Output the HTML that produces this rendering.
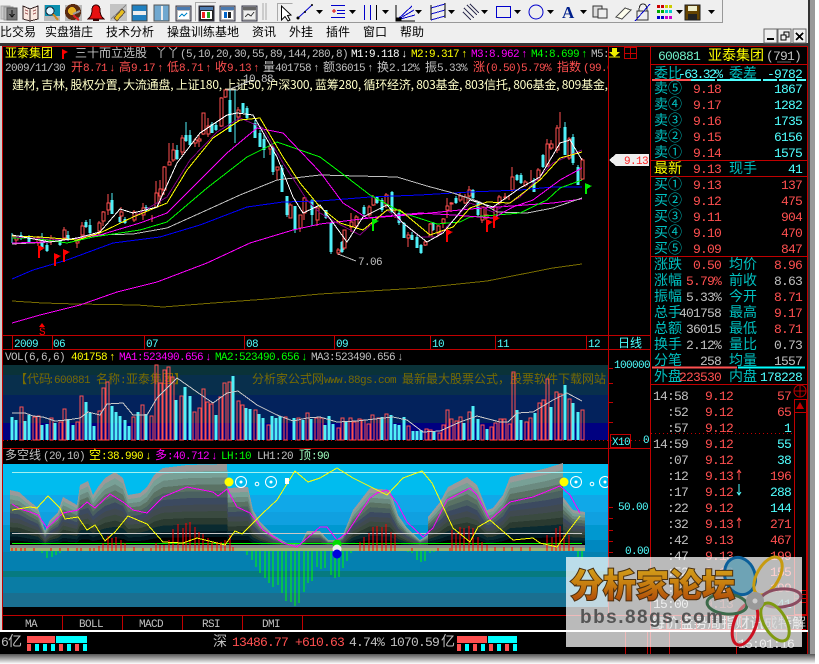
<!DOCTYPE html>
<html><head><meta charset="utf-8"><style>
html,body{margin:0;padding:0;background:#fff;width:819px;height:664px;overflow:hidden}
svg{display:block}
.s{shape-rendering:crispEdges}
text{white-space:pre}
.a{font:11px "Liberation Mono",monospace;letter-spacing:-.6px}
.b{font:13px "Liberation Mono",monospace;letter-spacing:-.8px}
.c{font:12px "WenQuanYi Zen Hei","Noto Sans CJK SC",sans-serif}
.d{font:14px "WenQuanYi Zen Hei","Noto Sans CJK SC",sans-serif}
.l{fill:none}
</style></head><body>
<svg width="819" height="664" viewBox="0 0 819 664" xmlns="http://www.w3.org/2000/svg">
<defs>
<linearGradient id="sh" x1="0" y1="0" x2="0" y2="1"><stop offset="0" stop-color="#555"/><stop offset="1" stop-color="#fff"/></linearGradient>
<linearGradient id="gd" x1="0" y1="0" x2="0" y2="1"><stop offset="0" stop-color="#d8b020"/><stop offset=".5" stop-color="#c88010"/><stop offset="1" stop-color="#a83808"/></linearGradient>
<path id="m" d="M10 548V490L19 492 28 500 38 508 45 531 50 520 58 512 63 497 77 505 80 485 88 481 93 495 98 487 105 478 115 472 123 478 128 495 140 493 147 487 154 475 163 468 187 465 227 464 228 488 248 487 253 510 260 522 273 535 287 543 300 545 307 531 320 531 328 540 337 540 343 535 353 510 370 488 390 490 398 515 407 528 420 540 428 535 428 517 440 502 448 487 467 477 477 485 487 510 493 508 503 495 510 477 547 468 563 463 563 497 573 510 585 512 585 548Z"/>
<clipPath id="cl"><rect x="3" y="464" width="605" height="143"/></clipPath>
<clipPath id="cm"><rect x="3" y="46" width="605" height="290"/></clipPath>
</defs>
<!-- window chrome -->
<rect width="819" height="664" fill="#fff"/>
<rect x="0" y="0" width="809" height="46" fill="#efefef"/>
<rect x="809" y="0" width="6" height="654" fill="#999"/>
<rect x="808" y="0" width="2" height="654" fill="#333"/>
<rect x="0" y="43" width="808" height="3" fill="#333"/>
<rect x="0" y="46" width="808" height="608" fill="#000"/>
<rect x="0" y="46" width="2" height="584" fill="#ccc"/>
<rect x="0" y="654" width="815" height="10" fill="url(#sh)"/>
<g class="s"><path d="M0 22.5H722.5V0" stroke="#999" fill="none"/><path d="M263 3V20M266 3V20" stroke="#aaa"/>
<path d="M195.500 21V2.500H216" fill="none" stroke="#aaa"/><path d="M277.500 21V3.500H292.500" fill="none" stroke="#aaa"/>
</g>
<!-- toolbar left icons -->
<g class="s">
<rect x="1" y="6" width="9" height="13" fill="#ccc" stroke="#aaa"/><rect x="4" y="7" width="9" height="13" fill="#bbb" stroke="#999"/><rect x="7" y="8" width="10" height="12" fill="#777" stroke="#555"/><path d="M12 10v6M9.500 14l2.500 3 2.500-3" stroke="#111" fill="none"/>
<path d="M23 6l7 3 8-3v13l-8 2-7-2z" fill="#fbe8e0" stroke="#322"/><path d="M30 9v12" stroke="#322"/><path d="M25 10l3 1M25 13l3 1M33 11l3-1M33 14l3-1" stroke="#a66"/>
<rect x="44" y="5" width="16" height="16" fill="#bbb"/><rect x="45" y="5" width="15" height="11" fill="#0a90b0"/><circle cx="50" cy="11" r="4" fill="#dff4ff" stroke="#123"/><path d="M53 14l5 6" stroke="#c82" stroke-width="2"/>
<rect x="65" y="5" width="17" height="16" fill="#bbb"/><circle cx="73" cy="12" r="8" fill="#5a2a10"/><circle cx="72" cy="11" r="4" fill="#e8b020"/><path d="M73 15l6 5" stroke="#d22" stroke-width="2"/><path d="M73 14l7-3" stroke="#999" stroke-width="2"/>
<path d="M88 19q4-3 4-9 0-5 4-5t4 5q0 6 4 9z" fill="#e81010" stroke="#300"/><rect x="93" y="19" width="6" height="2" fill="#300"/>
<rect x="110" y="4" width="17" height="17" fill="#c4c4c4"/><path d="M111 19l15-14" stroke="#888"/><path d="M114 18l8-9 3 3-8 9z" fill="#e8c020" stroke="#654"/>
<rect x="132" y="5" width="15" height="16" fill="#2080c0" stroke="#444"/><rect x="133" y="11" width="13" height="4" fill="#eee"/>
<rect x="154" y="5" width="15" height="16" fill="#70a8d0" stroke="#555"/><rect x="161" y="6" width="2" height="14" fill="#eee"/>
<rect x="176" y="6" width="15" height="15" fill="#bbb" stroke="#334"/><rect x="177" y="7" width="13" height="3" fill="#4a7ab0"/><rect x="178" y="11" width="11" height="8" fill="#fff"/><path d="M179 17l3-3 2 2 3-3" stroke="#08c" fill="none"/>
<rect x="199" y="6" width="15" height="15" fill="#222" stroke="#334"/><rect x="200" y="7" width="13" height="3" fill="#4a7ab0"/><rect x="201" y="11" width="11" height="8" fill="#fff"/><rect x="202" y="12" width="3" height="6" fill="#e22"/><rect x="207" y="12" width="3" height="6" fill="#2a2"/>
<rect x="220" y="6" width="15" height="15" fill="#bbb" stroke="#334"/><rect x="221" y="7" width="13" height="3" fill="#4a7ab0"/><rect x="222" y="11" width="11" height="8" fill="#fff"/><rect x="224" y="12" width="3" height="6" fill="#06c"/><rect x="228" y="12" width="3" height="6" fill="#222"/>
<rect x="242" y="6" width="15" height="15" fill="#bbb" stroke="#334"/><rect x="243" y="7" width="13" height="3" fill="#666"/><rect x="244" y="11" width="11" height="8" fill="#eee"/><path d="M245 17l3-3 3 2 3-4" stroke="#444" fill="none"/>
</g>
<!-- toolbar right icons -->
<path d="M281.500 6V20L285 16.500 288 21 290 20 287.500 15.500 291 15Z" fill="#fff" stroke="#000"/>
<path d="M298 18L312 5" stroke="#00c"/><circle cx="312" cy="5" r="1" fill="#000"/><circle cx="298" cy="18" r="1.500" fill="#000"/><circle cx="305" cy="12" r="1" fill="#000"/>
<g fill="#000"><path d="M316 10h7l-3.500 4zM349 10h7l-3.500 4zM382 10h7l-3.500 4zM415 10h7l-3.500 4zM448 10h7l-3.500 4zM481 10h7l-3.500 4zM514 10h7l-3.500 4zM547 10h7l-3.500 4zM580 10h7l-3.500 4zM676 10h7l-3.500 4zM708 10h7l-3.500 4z"/></g>
<g stroke="#00c" fill="none" class="s">
<path d="M331 5.500h14M331 17.500h14M337 10.500h8M337 13.500h8"/><path d="M334 9v4M332 11h4" stroke="#d00"/>
<path d="M364.500 5v15M370.500 5v15"/><path d="M376.500 5v15" stroke="#000"/>
<path d="M397 20L412 6M397 20L414 10M397 20L415 15" />
<path d="M396 5V21H415" stroke="#000"/><path d="M397 18l4 0v3h-4z" fill="#000" stroke="#000"/>
<path d="M431 8l14-4M431 14l14-4M431 20l14-4"/><path d="M431 5V20M445 3V18" stroke="#000"/>
<path d="M464 8l10 10M467 5l10 10M470 4l9 9M463 12l8 8" stroke="#335"/>
<rect x="496.500" y="6.500" width="14" height="11"/>
</g>
<circle cx="536" cy="12" r="7" fill="none" stroke="#00c"/>
<text x="562" y="18" font-family="Liberation Serif" font-weight="bold" font-size="17" fill="#00208c">A</text>
<g class="s"><rect x="593" y="6" width="9" height="11" fill="#ddd" stroke="#333"/><rect x="598" y="9" width="9" height="9" fill="#eee" stroke="#333"/>
<path d="M616 17l9-9 6 2-9 9z" fill="#ffe" stroke="#555"/>
<rect x="637" y="11" width="11" height="9" fill="#eee" stroke="#333"/><path d="M639 11q0-7 4-7t4 7" fill="none" stroke="#333"/><path d="M635 21L650 4" stroke="#00c"/>
<g><rect x="657" y="5" width="3" height="3" fill="#c00"/><rect x="661" y="5" width="3" height="3" fill="#c00"/><rect x="665" y="5" width="3" height="3" fill="#cc0"/><rect x="669" y="5" width="3" height="3" fill="#cc0"/><rect x="657" y="10" width="3" height="3" fill="#0a0"/><rect x="661" y="10" width="3" height="3" fill="#0a0"/><rect x="665" y="10" width="3" height="3" fill="#0cc"/><rect x="669" y="10" width="3" height="3" fill="#0cc"/><rect x="657" y="16" width="3" height="3" fill="#00c"/><rect x="661" y="16" width="3" height="3" fill="#00c"/><rect x="665" y="16" width="3" height="3" fill="#c0c"/><rect x="669" y="16" width="3" height="3" fill="#c0c"/></g>
<rect x="685" y="5" width="15" height="15" fill="#664400" stroke="#222"/><rect x="688" y="6" width="9" height="5" fill="#eec"/><rect x="688" y="14" width="9" height="6" fill="#222"/></g>
<!-- menu -->
<g class="c" fill="#000">
<text x="0" y="36">比交易</text><text x="45" y="36">实盘猎庄</text><text x="106" y="36">技术分析</text><text x="167" y="36">操盘训练基地</text><text x="252" y="36">资讯</text><text x="289" y="36">外挂</text><text x="326" y="36">插件</text><text x="363" y="36">窗口</text><text x="400" y="36">帮助</text>
</g>
<g class="s">
<rect x="764" y="29" width="13" height="14" fill="#efefef" stroke="#666"/><rect x="767" y="38" width="7" height="2" fill="#000"/>
<rect x="778" y="29" width="13" height="14" fill="#efefef" stroke="#666"/><rect x="784" y="32" width="5" height="5" fill="none" stroke="#000"/><rect x="781" y="35" width="5" height="5" fill="#efefef" stroke="#000"/>
<rect x="793" y="29" width="13" height="14" fill="#efefef" stroke="#666"/><path d="M796 33l7 7M803 33l-7 7" stroke="#000" stroke-width="1.500"/>
</g>
<!-- main chart -->
<g class="s" stroke="#c00000" fill="none">
<path d="M2.500 46V630M2 46.500H807.500V654M608.500 46V615M650.500 46V654"/>
<path d="M3 335.500H650M3 349.500H650M3 448.500H650M3 615.500H807M651 64.500H807M651 160.500H807M651 176.500H807M651 256.500H807M651 384.500H807"/>
<path d="M12.500 336V349M52.500 336V349M144.500 336V349M244.500 336V349M334.500 336V349M430.500 336V349M495.500 336V349M586.500 336V349"/>
<path d="M62.500 615V630M122.500 615V630M182.500 615V630M242.500 615V630M302.500 615V630M625.500 632V654M647.500 632V654M669.500 632V654M736.500 632V654M808 46"/>
<rect x="610.500" y="434.500" width="20" height="13"/>
<rect x="624.500" y="47.500" width="12" height="11"/><path d="M630.500 48V58M624 53.500H636"/>
<path d="M608 368.500h5M608 383.500h5M608 402.500h5M608 422.500h5M608 507.500h5M608 518.500h5M608 530.500h5M608 541.500h5M608 552.500h5"/>
<rect x="794.500" y="399.500" width="12" height="215"/><path d="M794 412.500h12M794 590.500h12M794 594.500h12M794 598.500h12M794 602.500h12"/>
</g>
<circle cx="800" cy="391" r="6" fill="none" stroke="#c00000"/><path d="M794 391h12M800 385v12" stroke="#c00000"/>
<path d="M800 402l4 7h-8z" fill="#c00000"/>
<path d="M609 160l7-6h33v12h-33z" fill="#eee" class="s"/>
<text class="a" x="624" y="164" fill="#ff2020">9.13</text>
<path d="M612 48h5v4h3l-5.500 5-5.500-5h3z" fill="#ee0"/><path d="M609 57h11" stroke="#ee0"/>
<!-- Header text -->
<g clip-path="url(#cm)">
<text class="c" x="5" y="57" fill="#ffff00">亚泰集团</text>
<path d="M62 49v10h2v-5l4-2z" fill="#ff0000"/>
<text class="c" x="75" y="57" fill="#c0c0c0">三十而立选股</text>
<text class="c" x="155" y="57" fill="#c0c0c0">丫丫</text>
<text class="a" x="180" y="57" fill="#c0c0c0">(5,10,20,30,55,89,144,280,8)</text>
<text class="a" x="351" y="57" fill="#fff">M1:9.118</text><text class="a" x="401" y="57" fill="#fff">↓</text>
<text class="a" x="411" y="57" fill="#ffff00">M2:9.317</text><text class="a" x="461" y="57" fill="#ffff00">↑</text>
<text class="a" x="471" y="57" fill="#ff00ff">M3:8.962</text><text class="a" x="521" y="57" fill="#ff00ff">↑</text>
<text class="a" x="531" y="57" fill="#00ff00">M4:8.699</text><text class="a" x="581" y="57" fill="#00ff00">↑</text>
<text class="a" x="591" y="57" fill="#c0c0c0">M5:</text>
<text class="a" x="5" y="71" fill="#c0c0c0">2009/11/30</text>
<g fill="#ff5050"><text class="c" x="71" y="71">开</text><text class="a" x="83" y="71">8.71</text><text class="a" x="109" y="71">↓</text><text class="c" x="119" y="71">高</text><text class="a" x="131" y="71">9.17</text><text class="a" x="157" y="71">↑</text><text class="c" x="167" y="71">低</text><text class="a" x="179" y="71">8.71</text><text class="a" x="205" y="71">↑</text><text class="c" x="215" y="71">收</text><text class="a" x="227" y="71">9.13</text><text class="a" x="253" y="71">↑</text></g>
<g fill="#c0c0c0"><text class="c" x="263" y="71">量</text><text class="a" x="275" y="71">401758</text><text class="a" x="313" y="71">↑</text><text class="c" x="323" y="71">额</text><text class="a" x="335" y="71">36015</text><text class="a" x="367" y="71">↑</text><text class="c" x="377" y="71">换</text><text class="a" x="389" y="71">2.12%</text><text class="c" x="425" y="71">振</text><text class="a" x="437" y="71">5.33%</text></g>
<g fill="#ff5050"><text class="c" x="473" y="71">涨</text><text class="a" x="485" y="71">(0.50)5.79%</text><text class="c" x="557" y="71">指数</text><text class="a" x="583" y="71">(99.0</text></g>
<text class="c" x="12" y="89" fill="#ffffc8" textLength="596">建材, 吉林, 股权分置, 大流通盘, 上证180, 上证50, 沪深300, 蓝筹280, 循环经济, 803基金, 803信托, 806基金, 809基金,</text>
<text class="a" x="243" y="82" fill="#c0c0c0">10.88</text>
<path d="M226 90h12" stroke="#c0c0c0"/>
</g>
<!-- Candles -->
<g class="s">
<path fill="none" stroke="#50f0f8" d="M12 233V243M21 232V240M29 235V243M42 233V249M47 243V252M60 238V246M68 231V241M86 220V228M90 219V235M112 193V214M120 213V223M125 217V224M146 205V212M177 145V160M186 122V142M190 130V146M212 122V133M216 122V131M230 90V132M235 90V143M243 103V113M247 106V119M255 120V138M260 130V147M264 135V158M273 145V175M282 165V192M287 196V217M295 206V233M312 199V226M326 210V219M331 223V254M342 241V253M364 205V216M377 196V204M382 198V212M392 191V213M399 211V225M404 222V238M412 232V240M417 235V248M421 244V254M433 222V231M456 196V204M473 189V199M478 202V216M517 174V181M521 173V184M534 178V192M543 154V168M565 122V155M573 134V165M578 165V185"/>
<path fill="none" stroke="#50f0f8" stroke-width="3" d="M21 235V238M29 237V242M42 243V248M47 245V251M60 240V245M68 235V240M86 222V227M90 225V233M112 200V214M120 217V222M125 219V223M146 207V211M177 150V159M186 135V141M190 135V145M212 124V133M216 125V130M230 100V132M243 103V113M247 108V118M255 123V138M260 133V147M264 139V150M273 147V172M282 168V192M287 196V215M295 206V230M312 200V215M326 210V218M331 223V252M342 242V252M364 207V214M377 197V203M382 200V210M392 192V212M399 213V223M404 223V238M412 235V240M417 237V248M421 245V253M433 223V230M456 198V203M473 190V198M478 203V215M517 175V180M521 175V183M534 180V192M543 155V167M565 127V155M573 137V163M578 167V185"/>
<path fill="none" stroke="#ff5050" d="M16 237V245M38 236V246M51 235V245M64 227V240M77 240V248M82 222V238M99 221V235M103 211V226M108 194V215M121 207V221M134 210V222M143 203V220M152 215V222M156 181V208M160 180V204M164 166V195M169 143V165M173 143V162M182 135V155M195 138V147M199 135V147M203 113V135M208 118V137M221 97V127M225 90V98M238 107V122M270 145V155M277 167V180M290 203V218M300 215V232M304 197V220M317 207V226M338 248V255M344 230V250M351 213V232M356 215V229M369 205V217M373 195V206M386 193V208M395 210V218M408 232V247M425 241V246M430 223V237M438 225V237M443 218V228M447 198V218M451 202V212M460 192V202M465 194V204M469 186V200M482 207V223M486 207V220M495 205V218M499 195V205M505 193V200M509 195V200M512 167V192M525 180V187M531 170V183M538 168V180M547 139V167M551 140V150M557 125V153M560 112V128M569 137V160M582 158V180"/>
<path fill="#000" stroke="#ff5050" d="M15 238h3v2h-3zM37 238h3v5h-3zM50 239h3v2h-3zM63 230h3v8h-3zM76 241h3v2h-3zM81 226h3v9h-3zM98 223h3v8h-3zM102 212h3v9h-3zM107 203h3v7h-3zM120 212h3v4h-3zM133 212h3v8h-3zM142 208h3v7h-3zM155 193h3v14h-3zM159 189h3v7h-3zM163 167h3v23h-3zM168 162h3v3h-3zM172 150h3v10h-3zM181 138h3v14h-3zM194 140h3v3h-3zM198 139h3v2h-3zM202 113h3v21h-3zM207 126h3v8h-3zM220 98h3v28h-3zM224 90h3v7h-3zM237 110h3v7h-3zM269 146h3v3h-3zM276 167h3v3h-3zM289 205h3v13h-3zM299 215h3v13h-3zM303 198h3v15h-3zM316 208h3v12h-3zM337 250h3v3h-3zM343 230h3v18h-3zM350 222h3v5h-3zM355 217h3v9h-3zM368 207h3v8h-3zM372 197h3v8h-3zM385 195h3v10h-3zM407 235h3v3h-3zM424 242h3v3h-3zM429 224h3v13h-3zM437 226h3v7h-3zM442 219h3v4h-3zM446 206h3v4h-3zM450 203h3v1h-3zM459 196h3v4h-3zM464 197h3v6h-3zM468 190h3v6h-3zM481 207h3v13h-3zM485 215h3v3h-3zM494 207h3v10h-3zM498 197h3v6h-3zM504 197h3v1h-3zM511 177h3v13h-3zM524 182h3v3h-3zM537 170h3v10h-3zM546 144h3v22h-3zM550 144h3v4h-3zM556 128h3v22h-3zM568 139h3v19h-3zM581 160h3v19h-3z"/>
</g>
<!-- MAs -->
<g fill="none" stroke-width="1" class="s">
<polyline stroke="#786c00" points="12,301 43,303 77,304 137,305 163,307 213,303 267,299 320,294 353,292 420,288 487,281 553,268 582,264"/>
<polyline stroke="#ff00ff" points="12,323 40,315 80,305 117,292 157,282 207,263 250,243 293,230 320,224 370,218 420,214 470,209 553,203 582,199"/>
<polyline stroke="#0000ff" points="12,279 33,270 67,260 113,243 160,237 200,225 247,207 283,202 320,201 370,197 420,195 470,192 520,190 553,187 582,187"/>
<polyline stroke="#c0c0c0" points="12,244 50,242 100,235 133,234 167,228 207,210 240,195 277,180 320,175 397,177 427,186 453,193 480,202 497,212 527,213 553,208 582,198"/>
<polyline stroke="#00ff00" points="12,238 33,238 67,243 93,237 140,230 167,222 207,188 247,157 277,142 320,157 340,172 370,195 403,213 437,224 460,222 470,217 497,215 520,213 547,200 560,188 582,180"/>
<polyline stroke="#ff00ff" points="12,243 50,242 100,235 140,223 167,213 200,180 227,153 257,128 283,133 320,172 343,203 367,218 420,213 453,215 493,218 513,207 533,200 560,180 582,168"/>
<polyline stroke="#800080" points="12,237 67,240 100,233 133,217 167,197 190,160 217,132 240,118 263,128 283,163 307,200 320,213 337,223 360,235 387,210 420,237 437,237 470,203 493,212 520,197 553,163 582,150"/>
<polyline stroke="#ffff00" points="12,236 40,237 77,240 100,233 133,217 167,203 187,170 213,138 240,120 260,118 283,157 300,183 320,207 340,223 363,230 387,210 400,210 430,235 453,227 470,208 487,202 510,203 540,180 560,158 582,152"/>
<polyline stroke="#ffffff" points="12,235 50,242 77,238 100,232 120,209 133,213 157,207 177,163 200,133 227,115 237,113 253,115 277,157 293,197 303,213 320,205 347,242 363,217 387,205 403,223 427,242 443,233 470,200 493,207 520,188 540,177 560,143 570,140 582,160"/>
<path d="M228 90L250 81M338 254L356 261" stroke="#c0c0c0" fill="none"/>
<g fill="#ff0000" stroke="none"><path d="M38 245v13h2v-7l5-3zM54 253v13h2v-7l5-3zM63 249v13h2v-7l5-3zM446 229v13h2v-7l5-3zM486 219v13h2v-7l5-3zM493 215v13h2v-7l5-3z"/></g>
<g fill="#00ee00" stroke="none"><path d="M372 218v13h2v-7l5-3zM585 183v11h2v-5l5-3z"/></g>
</g>
<text class="a" x="358" y="265" fill="#c0c0c0">7.06</text>
<path d="M42 323l3 4h-6z" fill="#ff0000"/><text class="a" x="39" y="335" fill="#ff0000" font-weight="bold">S</text>
<!-- date axis -->
<g class="a" fill="#50ffff"><text x="14" y="347">2009</text><text x="53" y="347">06</text><text x="146" y="347">07</text><text x="246" y="347">08</text><text x="336" y="347">09</text><text x="432" y="347">10</text><text x="497" y="347">11</text><text x="588" y="347">12</text></g>
<text class="c" x="618" y="347" fill="#50ffff">日线</text>
<!-- VOL -->
<text class="a" x="5" y="360" fill="#c0c0c0">VOL(6,6,6)</text><text class="a" x="71" y="360" fill="#ffff00">401758</text><text class="a" x="109" y="360" fill="#ffff00">↑</text>
<text class="a" x="119" y="360" fill="#ff00ff">MA1:523490.656</text><text class="a" x="205" y="360" fill="#ff00ff">↓</text>
<text class="a" x="215" y="360" fill="#00ff00">MA2:523490.656</text><text class="a" x="301" y="360" fill="#00ff00">↓</text>
<text class="a" x="311" y="360" fill="#c0c0c0">MA3:523490.656</text><text class="a" x="397" y="360" fill="#c0c0c0">↓</text>
<g class="s">
<rect x="3" y="365" width="605" height="10" fill="#0a3238"/><rect x="3" y="375" width="605" height="20" fill="#082f4c"/><rect x="3" y="395" width="605" height="28" fill="#03225c"/><rect x="3" y="423" width="605" height="17" fill="#000080"/>
</g>
<g fill="#786c00">
<text class="c" x="15" y="383">【代码</text><text class="a" x="48" y="383">:600881</text><text class="c" x="96" y="383">名称</text><text class="a" x="120" y="383">:</text><text class="c" x="126" y="383">亚泰集团】</text>
<text class="c" x="252" y="383">分析家公式网</text><text class="a" x="324" y="383">www.88gs.com</text><text class="c" x="402" y="383">最新最大股票公式，股票软件下载网站</text>
</g>
<g class="s">
<path fill="none" stroke="#50f0f8" stroke-width="3" d="M12 417V440M16 420V440M25 421V440M29 415V440M42 425V440M47 424V440M55 423V440M68 419V440M73 425V440M86 402V440M90 413V440M94 426V440M112 406V440M116 412V440M120 416V440M125 420V440M129 426V440M138 412V440M146 414V440M176 400V440M185 387V440M190 396V440M216 415V440M233 376V440M246 408V440M250 409V440M259 414V440M263 418V440M272 416V440M276 418V440M280 416V440M294 418V440M303 420V440M311 419V440M325 425V440M329 416V440M333 424V440M346 421V440M382 417V440M391 415V440M395 424V440M399 425V440M404 417V440M413 431V440M417 431V440M421 430V440M434 431V440M464 423V440M473 406V440M478 419V440M487 429V440M517 410V440M521 420V440M535 413V440M551 407V440M565 385V440M573 403V440M578 412V440"/>
<path fill="none" stroke="#ff5050" d="M20 407h3v33h-3zM33 417h3v23h-3zM37 416h3v24h-3zM50 418h3v22h-3zM59 422h3v18h-3zM63 409h3v31h-3zM76 422h3v18h-3zM80 396h3v44h-3zM98 411h3v29h-3zM102 388h3v52h-3zM106 382h3v58h-3zM132 417h3v23h-3zM141 405h3v35h-3zM150 416h3v24h-3zM155 365h3v75h-3zM159 383h3v57h-3zM163 370h3v70h-3zM167 367h3v73h-3zM171 377h3v63h-3zM180 396h3v44h-3zM193 412h3v28h-3zM198 408h3v32h-3zM202 389h3v51h-3zM206 402h3v38h-3zM210 404h3v36h-3zM219 397h3v43h-3zM223 383h3v57h-3zM228 382h3v58h-3zM237 401h3v39h-3zM241 405h3v35h-3zM254 410h3v30h-3zM267 425h3v15h-3zM284 417h3v23h-3zM297 418h3v22h-3zM306 413h3v27h-3zM315 418h3v22h-3zM320 418h3v22h-3zM337 428h3v12h-3zM341 418h3v22h-3zM349 418h3v22h-3zM353 422h3v18h-3zM358 419h3v21h-3zM362 420h3v20h-3zM367 424h3v16h-3zM371 415h3v25h-3zM377 418h3v22h-3zM385 414h3v26h-3zM407 426h3v14h-3zM425 429h3v11h-3zM429 430h3v10h-3zM438 433h3v7h-3zM442 425h3v15h-3zM446 410h3v30h-3zM450 419h3v21h-3zM455 421h3v19h-3zM459 417h3v23h-3zM468 412h3v28h-3zM481 425h3v15h-3zM490 427h3v13h-3zM494 423h3v17h-3zM499 419h3v21h-3zM503 419h3v21h-3zM508 424h3v16h-3zM512 372h3v68h-3zM525 422h3v18h-3zM529 418h3v22h-3zM538 403h3v37h-3zM542 400h3v40h-3zM546 379h3v61h-3zM555 392h3v48h-3zM559 394h3v46h-3zM568 399h3v41h-3zM581 410h3v30h-3z"/>
<path d="M3 440.500H650" stroke="#c00000" stroke-dasharray="1 3"/>
</g>
<polyline class="s" fill="none" stroke="#c8c8c8" points="12,413 25,413 33,416 43,417 55,421 67,420 80,418 88,412 100,415 107,404 123,403 133,415 147,415 157,398 177,378 197,392 213,403 227,393 238,391 257,405 277,415 293,421 307,418 320,417 337,422 357,421 393,417 407,420 423,432 440,431 460,422 477,416 500,422 508,422 517,413 533,412 553,400 567,393 582,401"/>
<text class="a" x="614" y="368" fill="#50ffff">100000</text>
<text class="a" x="612" y="445" fill="#50ffff">X10</text><text class="a" x="643" y="443" fill="#50ffff">0</text>
<!-- Lower -->
<text class="c" x="5" y="459" fill="#c0c0c0">多空线</text><text class="a" x="43" y="459" fill="#c0c0c0">(20,10)</text>
<text class="c" x="89" y="459" fill="#ffff00">空</text><text class="a" x="101" y="459" fill="#ffff00">:38.990</text><text class="a" x="145" y="459" fill="#ffff00">↓</text>
<text class="c" x="155" y="459" fill="#ff00ff">多</text><text class="a" x="167" y="459" fill="#ff00ff">:40.712</text><text class="a" x="211" y="459" fill="#ff00ff">↓</text>
<text class="a" x="221" y="459" fill="#00ff00">LH:10</text><text class="a" x="257" y="459" fill="#c0c0c0">LH1:20</text>
<text class="c" x="299" y="459" fill="#a0ffc0">顶</text><text class="a" x="311" y="459" fill="#a0ffc0">:90</text>
<g class="s">
<rect x="3" y="464" width="605" height="31" fill="#00bcef"/><rect x="3" y="495" width="605" height="17" fill="#10a8e8"/><rect x="3" y="512" width="605" height="13" fill="#10a0e0"/><rect x="3" y="525" width="605" height="15" fill="#0098d0"/><rect x="3" y="540" width="605" height="12" fill="#0088c0"/><rect x="3" y="552" width="605" height="19" fill="#0480b0"/><rect x="3" y="571" width="605" height="6" fill="#067a80"/><rect x="3" y="577" width="605" height="16" fill="#0a7ca4"/><rect x="3" y="593" width="605" height="14" fill="#1a6f90"/>
<g transform="translate(0,548)">
<use href="#m" y="-548" fill="#9a9a9a" transform="scale(1,1)"/>
<use href="#m" y="-548" fill="#78a096" transform="scale(1,.92)"/>
<use href="#m" y="-548" fill="#6b8a80" transform="scale(1,.84)"/>
<use href="#m" y="-548" fill="#5a7264" transform="scale(1,.76)"/>
<use href="#m" y="-548" fill="#4a6060" transform="scale(1,.68)"/>
<use href="#m" y="-548" fill="#3c4a60" transform="scale(1,.60)"/>
<use href="#m" y="-548" fill="#404a50" transform="scale(1,.52)"/>
<use href="#m" y="-548" fill="#3a4a40" transform="scale(1,.44)"/>
<use href="#m" y="-548" fill="#2a3a30" transform="scale(1,.36)"/>
<use href="#m" y="-548" fill="#0a2a30" transform="scale(1,.28)"/>
<use href="#m" y="-548" fill="#001820" transform="scale(1,.20)"/>
<use href="#m" y="-548" fill="#000" transform="scale(1,.13)"/>
</g>
<rect x="10" y="545" width="575" height="3" fill="#888"/><rect x="10" y="548" width="575" height="3" fill="#a0b070"/>
<path d="M12 472.500H582" stroke="#a0f0f0"/><path d="M12 533.500H582" stroke="#c8c8c8"/><path d="M12 543.500H582" stroke="#00ff00"/>
<!-- histogram -->
<path fill="none" stroke="#ff0000" d="M12 548V551M16 548V551M21 548V551M25 548V551M34 548V551M51 548V551M60 548V551M68 548V551M77 548V551M81 548V551M90 548V551M94 548V551M99 546V551M103 543V551M108 536V551M112 538V551M116 537V551M121 540V551M125 543V551M134 547V551M143 548V551M151 548V551M156 543V551M160 545V551M164 545V551M169 540V551M173 529V551M178 524V551M183 528V551M186 523V551M190 522V551M195 527V551M199 532V551M203 534V551M208 538V551M212 542V551M217 542V551M221 542V551M225 540V551M230 535V551M233 547V551M360 542V551M364 537V551M369 533V551M373 527V551M377 526V551M382 527V551M386 524V551M391 532V551M395 534V551M412 548V551M438 548V551M450 548V551M452 530V551M456 533V551M460 527V551M464 528V551M469 526V551M473 528V551M478 537V551M482 542V551M487 545V551M495 547V551M504 547V551M512 547V551M521 547V551M530 547V551M547 535V551M552 537V551M556 528V551M560 526V551M564 535V551M569 535V551M573 547V551"/>
<path fill="none" stroke="#00ff00" d="M42 551V553M47 551V558M52 551V557M56 551V555M60 551V553M247 551V555M252 551V560M256 551V567M260 551V573M265 551V578M269 551V583M273 551V587M278 551V585M282 551V593M286 551V601M291 551V602M295 551V606M299 551V603M304 551V592M308 551V583M312 551V581M317 551V567M321 551V569M325 551V568M331 551V575M335 551V578M339 551V577M343 551V568M347 551V561M351 551V553M408 551V552M412 551V553M417 551V560M421 551V562M425 551V561M430 551V553M434 551V552M578 551V557M582 551V560"/>
</g>
<g clip-path="url(#cl)" fill="none">
<g class="s">
<polyline stroke="#ff00ff" points="12,504 20,509 30,512 38,515 47,528 63,513 78,510 87,502 95,508 110,494 123,502 133,510 147,513 163,497 187,487 213,492 218,496 227,489 237,507 250,513 263,530 283,543 297,547 320,527 327,527 337,540 347,533 370,498 377,493 387,490 397,503 407,522 423,537 433,528 447,500 470,488 477,495 490,520 510,502 533,497 560,486 570,495 580,513"/>
<polyline stroke="#ffff00" points="12,510 30,507 37,508 48,496 60,508 65,519 78,517 87,530 95,525 105,541 115,532 128,516 147,524 163,542 183,543 197,538 213,542 225,545 235,531 242,534 263,513 277,500 295,471 308,482 320,478 337,468 353,478 373,488 387,495 403,478 422,471 432,483 453,528 470,542 478,527 490,520 513,540 533,538 540,543 557,547 567,533 580,516"/>
</g>
<circle cx="229" cy="482" r="4.500" fill="#ffff00"/>
<circle cx="241" cy="482" r="5.500" stroke="#fff"/><circle cx="241" cy="482" r="1.500" fill="#fff"/>
<circle cx="257" cy="484" r="1.800" stroke="#fff"/>
<circle cx="271" cy="482" r="5.500" stroke="#fff"/><circle cx="271" cy="482" r="1.500" fill="#fff"/>
<rect x="285" y="478" width="4" height="6" fill="#fff"/>
<circle cx="564" cy="482" r="4.500" fill="#ffff00"/>
<circle cx="576" cy="482" r="5.500" stroke="#fff"/><circle cx="576" cy="482" r="1.500" fill="#fff"/>
<circle cx="592" cy="484" r="1.800" stroke="#fff"/>
<circle cx="605" cy="482" r="5.500" stroke="#fff"/><circle cx="605" cy="482" r="1.500" fill="#fff"/>
<circle cx="337" cy="544" r="4.500" fill="#00dd00"/><circle cx="337" cy="549" r="4.500" fill="#eee"/><circle cx="337" cy="554" r="4.500" fill="#0000dd"/>
</g>
<text class="a" x="618" y="510" fill="#50ffff">50.00</text><text class="a" x="625" y="554" fill="#50ffff">0.00</text>
<!-- tabs -->
<g class="a" fill="#c0c0c0" text-anchor="middle"><text x="31" y="627">MA</text><text x="91" y="627">BOLL</text><text x="151" y="627">MACD</text><text x="211" y="627">RSI</text><text x="271" y="627">DMI</text></g>
<rect x="0" y="630" width="808" height="2" fill="#fff"/>
<!-- Right panel -->
<text class="b" x="658" y="60" fill="#70f0c8">600881</text><text class="d" x="708" y="60" fill="#ffff00">亚泰集团</text><text class="b" x="766" y="60" fill="#c0c0c0">(791)</text>
<path d="M777 62h14" stroke="#666" class="s"/>
<text class="d" x="654" y="78" fill="#00c0c0">委比</text><text class="b" x="678" y="78" fill="#50ffff" style="letter-spacing:-1.600px">-63.32%</text><text class="d" x="729" y="78" fill="#00c0c0">委差</text><text class="b" x="802" y="78" fill="#50ffff" text-anchor="end">-9782</text>
<path d="M652 80h39M696 80h4" stroke="#ff5050" stroke-width="2" class="s"/><path d="M691 80h24M717 80h44M763 80h14M779 80h16M797 80h9" stroke="#50ffff" stroke-width="2" class="s"/>
<g class="d" fill="#00c0c0">
<text x="654" y="93">卖⑤</text><text x="654" y="109">卖④</text><text x="654" y="125">卖③</text><text x="654" y="141">卖②</text><text x="654" y="157">卖①</text>
<text x="654" y="189">买①</text><text x="654" y="205">买②</text><text x="654" y="221">买③</text><text x="654" y="237">买④</text><text x="654" y="253">买⑤</text>
<text x="654" y="269">涨跌</text><text x="654" y="285">涨幅</text><text x="654" y="301">振幅</text><text x="654" y="317">总手</text><text x="654" y="333">总额</text><text x="654" y="349">换手</text><text x="654" y="365">分笔</text><text x="654" y="381">外盘</text>
<text x="729" y="173">现手</text><text x="729" y="269">均价</text><text x="729" y="285">前收</text><text x="729" y="301">今开</text><text x="729" y="317">最高</text><text x="729" y="333">最低</text><text x="729" y="349">量比</text><text x="729" y="365">均量</text><text x="729" y="381">内盘</text>
</g>
<text class="d" x="654" y="173" fill="#ffff00">最新</text>
<g class="b" fill="#ff5050" text-anchor="end">
<text x="721" y="93">9.18</text><text x="721" y="109">9.17</text><text x="721" y="125">9.16</text><text x="721" y="141">9.15</text><text x="721" y="157">9.14</text><text x="721" y="173">9.13</text><text x="721" y="189">9.13</text><text x="721" y="205">9.12</text><text x="721" y="221">9.11</text><text x="721" y="237">9.10</text><text x="721" y="253">9.09</text><text x="721" y="269">0.50</text><text x="721" y="285">5.79%</text><text x="721" y="381">223530</text>
<text x="802" y="189">137</text><text x="802" y="205">475</text><text x="802" y="221">904</text><text x="802" y="237">470</text><text x="802" y="253">847</text><text x="802" y="269">8.96</text><text x="802" y="301">8.71</text><text x="802" y="317">9.17</text><text x="802" y="333">8.71</text>
</g>
<g class="b" fill="#50ffff" text-anchor="end">
<text x="802" y="93">1867</text><text x="802" y="109">1282</text><text x="802" y="125">1735</text><text x="802" y="141">6156</text><text x="802" y="157">1575</text><text x="802" y="173">41</text><text x="802" y="381">178228</text>
</g>
<g class="b" fill="#c0c0c0" text-anchor="end">
<text x="721" y="301">5.33%</text><text x="721" y="317">401758</text><text x="721" y="333">36015</text><text x="721" y="349">2.12%</text><text x="721" y="365">258</text>
<text x="802" y="285">8.63</text><text x="802" y="349">0.73</text><text x="802" y="365">1557</text>
</g>
<path d="M652 367.500H737" stroke="#ff5050" stroke-width="2" class="s"/><path d="M738 367.500H805" stroke="#00ffff" stroke-width="2" class="s"/>
<!-- ticks -->
<g class="b" fill="#c0c0c0" text-anchor="end">
<text x="688" y="400">14:58</text><text x="688" y="416">:52</text><text x="688" y="432">:57</text><text x="688" y="448">14:59</text><text x="688" y="464">:07</text><text x="688" y="480">:12</text><text x="688" y="496">:17</text><text x="688" y="512">:22</text><text x="688" y="528">:32</text><text x="688" y="544">:42</text><text x="688" y="560">:47</text><text x="688" y="576">:52</text><text x="688" y="592">:57</text><text x="688" y="608">15:00</text>
</g>
<g class="b" fill="#ff5050">
<text x="705" y="400">9.12</text><text x="705" y="416">9.12</text><text x="705" y="432">9.12</text><text x="705" y="448">9.12</text><text x="705" y="464">9.12</text><text x="705" y="480">9.13</text><text x="705" y="496">9.12</text><text x="705" y="512">9.12</text><text x="705" y="528">9.13</text><text x="705" y="544">9.13</text><text x="705" y="560">9.13</text><text x="705" y="576">9.13</text><text x="705" y="592">9.13</text><text x="705" y="608">9.13</text>
</g>
<path d="M739 470v10M737 473l2-3 2 3M739 528v-10M737 521l2-3 2 3" stroke="#ff5050" fill="none"/><path d="M739 484v11M737 492l2 3 2-3" stroke="#50ffff" fill="none"/>
<g class="b" text-anchor="end">
<g fill="#ff5050"><text x="791" y="400">57</text><text x="791" y="416">65</text><text x="791" y="480">196</text><text x="791" y="528">271</text><text x="791" y="544">467</text><text x="791" y="560">199</text><text x="791" y="576">155</text><text x="791" y="592">199</text></g>
<g fill="#50ffff"><text x="791" y="432">1</text><text x="791" y="448">55</text><text x="791" y="464">38</text><text x="791" y="496">288</text><text x="791" y="512">144</text><text x="791" y="608">41</text></g>
</g>
<path d="M651 433.500H794" stroke="#c00000" stroke-dasharray="1 3" class="s"/>
<g class="d" fill="#c0c0c0"><text x="651" y="628" textLength="155">每价盘势周指财讯成特解</text></g>
<path d="M651 615.500h155M651 629.500h155" stroke="#c00000" class="s"/>
<path d="M666.500 615V630M681.500 615V630M696.500 615V630M711.500 615V630M726.500 615V630M741.500 615V630M756.500 615V630M771.500 615V630M786.500 615V630" stroke="#c00000" class="s"/>
<!-- status bar -->
<text class="b" x="1" y="646" fill="#c0c0c0">6</text><text class="d" x="8" y="646" fill="#c0c0c0">亿</text>
<g class="s">
<rect x="27" y="636" width="28" height="7" fill="#ff5050"/><rect x="56" y="636" width="31" height="7" fill="#00ffff"/>
<rect x="27" y="644" width="4" height="7" fill="#ff5050"/><rect x="35" y="644" width="4" height="7" fill="#00ffff"/><rect x="43" y="644" width="4" height="7" fill="#00ffff"/><rect x="51" y="644" width="4" height="7" fill="#00ffff"/><rect x="59" y="644" width="4" height="7" fill="#ff5050"/><rect x="67" y="644" width="4" height="7" fill="#00ffff"/><rect x="75" y="644" width="4" height="7" fill="#ff5050"/><rect x="83" y="644" width="4" height="7" fill="#00ffff"/>
<rect x="457" y="636" width="30" height="7" fill="#ff5050"/><rect x="488" y="636" width="29" height="7" fill="#00ffff"/>
<rect x="457" y="644" width="4" height="7" fill="#ff5050"/><rect x="465" y="644" width="4" height="7" fill="#00ffff"/><rect x="473" y="644" width="4" height="7" fill="#ff5050"/><rect x="481" y="644" width="4" height="7" fill="#00ffff"/><rect x="489" y="644" width="4" height="7" fill="#ff5050"/><rect x="497" y="644" width="4" height="7" fill="#00ffff"/><rect x="505" y="644" width="4" height="7" fill="#ff5050"/><rect x="513" y="644" width="4" height="7" fill="#00ffff"/>
</g>
<text class="d" x="213" y="646" fill="#c0c0c0">深</text>
<text class="b" x="232" y="646" fill="#ff5050">13486.77</text><text class="b" x="295" y="646" fill="#ff5050">+610.63</text>
<text class="b" x="349" y="646" fill="#c0c0c0">4.74%</text><text class="b" x="390" y="646" fill="#c0c0c0">1070.59</text><text class="d" x="441" y="646" fill="#c0c0c0">亿</text>
<text class="b" x="738" y="648" fill="#c0c0c0">15:01:16</text>
<!-- watermark -->
<rect x="566" y="557" width="236" height="90" fill="#fff" fill-opacity=".73"/>
<g stroke-width="3" fill-opacity=".55">
<ellipse cx="740" cy="576" rx="15" ry="19" transform="rotate(-20 740 576)" fill="#3090b0" stroke="#0b5f9a"/>
<ellipse cx="768" cy="576" rx="11" ry="21" transform="rotate(30 768 576)" fill="none" stroke="#c79b10"/>
<ellipse cx="781" cy="598" rx="20" ry="9" transform="rotate(-5 781 598)" fill="#ccc" stroke="#8a4b60"/>
<ellipse cx="775" cy="622" rx="11" ry="21" transform="rotate(-30 775 622)" fill="#ccc" stroke="#7f9a10"/>
<ellipse cx="745" cy="624" rx="11" ry="22" transform="rotate(20 745 624)" fill="none" stroke="#cc1020"/>
<ellipse cx="727" cy="604" rx="20" ry="10" transform="rotate(5 727 604)" fill="#bbb" stroke="#3c6a4a"/>
</g>
<circle cx="755" cy="601" r="9" fill="#999"/><circle cx="755" cy="601" r="2.500" fill="#ccc"/>
<text x="570" y="597" font-family="Noto Sans CJK SC,sans-serif" font-weight="900" font-size="33" fill="#4a3010" stroke="#4a3010" stroke-width="2" textLength="165">分析家论坛</text>
<text x="570" y="597" font-family="Noto Sans CJK SC,sans-serif" font-weight="900" font-size="33" fill="url(#gd)" textLength="165">分析家论坛</text>
<text x="580" y="623" font-family="Liberation Sans,sans-serif" font-weight="bold" font-size="19" fill="#555" textLength="143">bbs.88gs.com</text>
</svg>
</body></html>
